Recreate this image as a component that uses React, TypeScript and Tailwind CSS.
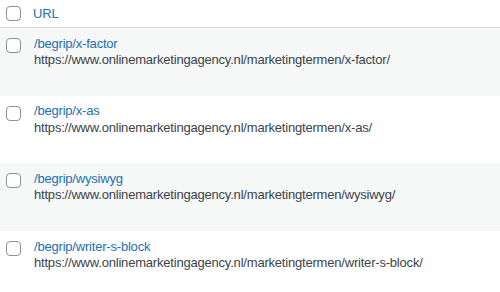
const rows = [
  { slug: "/begrip/x-factor", url: "https://www.onlinemarketingagency.nl/marketingtermen/x-factor/" },
  { slug: "/begrip/x-as", url: "https://www.onlinemarketingagency.nl/marketingtermen/x-as/" },
  { slug: "/begrip/wysiwyg", url: "https://www.onlinemarketingagency.nl/marketingtermen/wysiwyg/" },
  { slug: "/begrip/writer-s-block", url: "https://www.onlinemarketingagency.nl/marketingtermen/writer-s-block/" },
];

function Box({ className = "" }: { className?: string }) {
  return (
    <span
      className={`block w-[15px] h-[15px] rounded-[4px] border border-[#8c8f94] bg-white shrink-0 ${className}`}
    />
  );
}

export default function App() {
  return (
    <div className="w-[500px] h-[292px] overflow-hidden bg-white text-[13px] tracking-[-0.2px] text-[#3c434a] font-['Liberation_Sans',Arial,sans-serif]">
      <div className="flex items-center gap-[12px] h-[28px] pl-[6px] border-b border-[#dcdcde]">
        <Box />
        <span className="text-[#2271b1] leading-[19px]">URL</span>
      </div>
      {rows.map((r, i) => (
        <div
          key={r.slug}
          className={`flex items-start gap-[13px] h-[67.7px] pl-[6px] ${i % 2 === 0 ? "bg-[#f6f7f7]" : "bg-white"}`}
        >
          <Box className="mt-[10px]" />
          <div className="mt-[7.5px] leading-[16.5px]">
            <div className="text-[#2271b1]">{r.slug}</div>
            <div>{r.url}</div>
          </div>
        </div>
      ))}
    </div>
  );
}
